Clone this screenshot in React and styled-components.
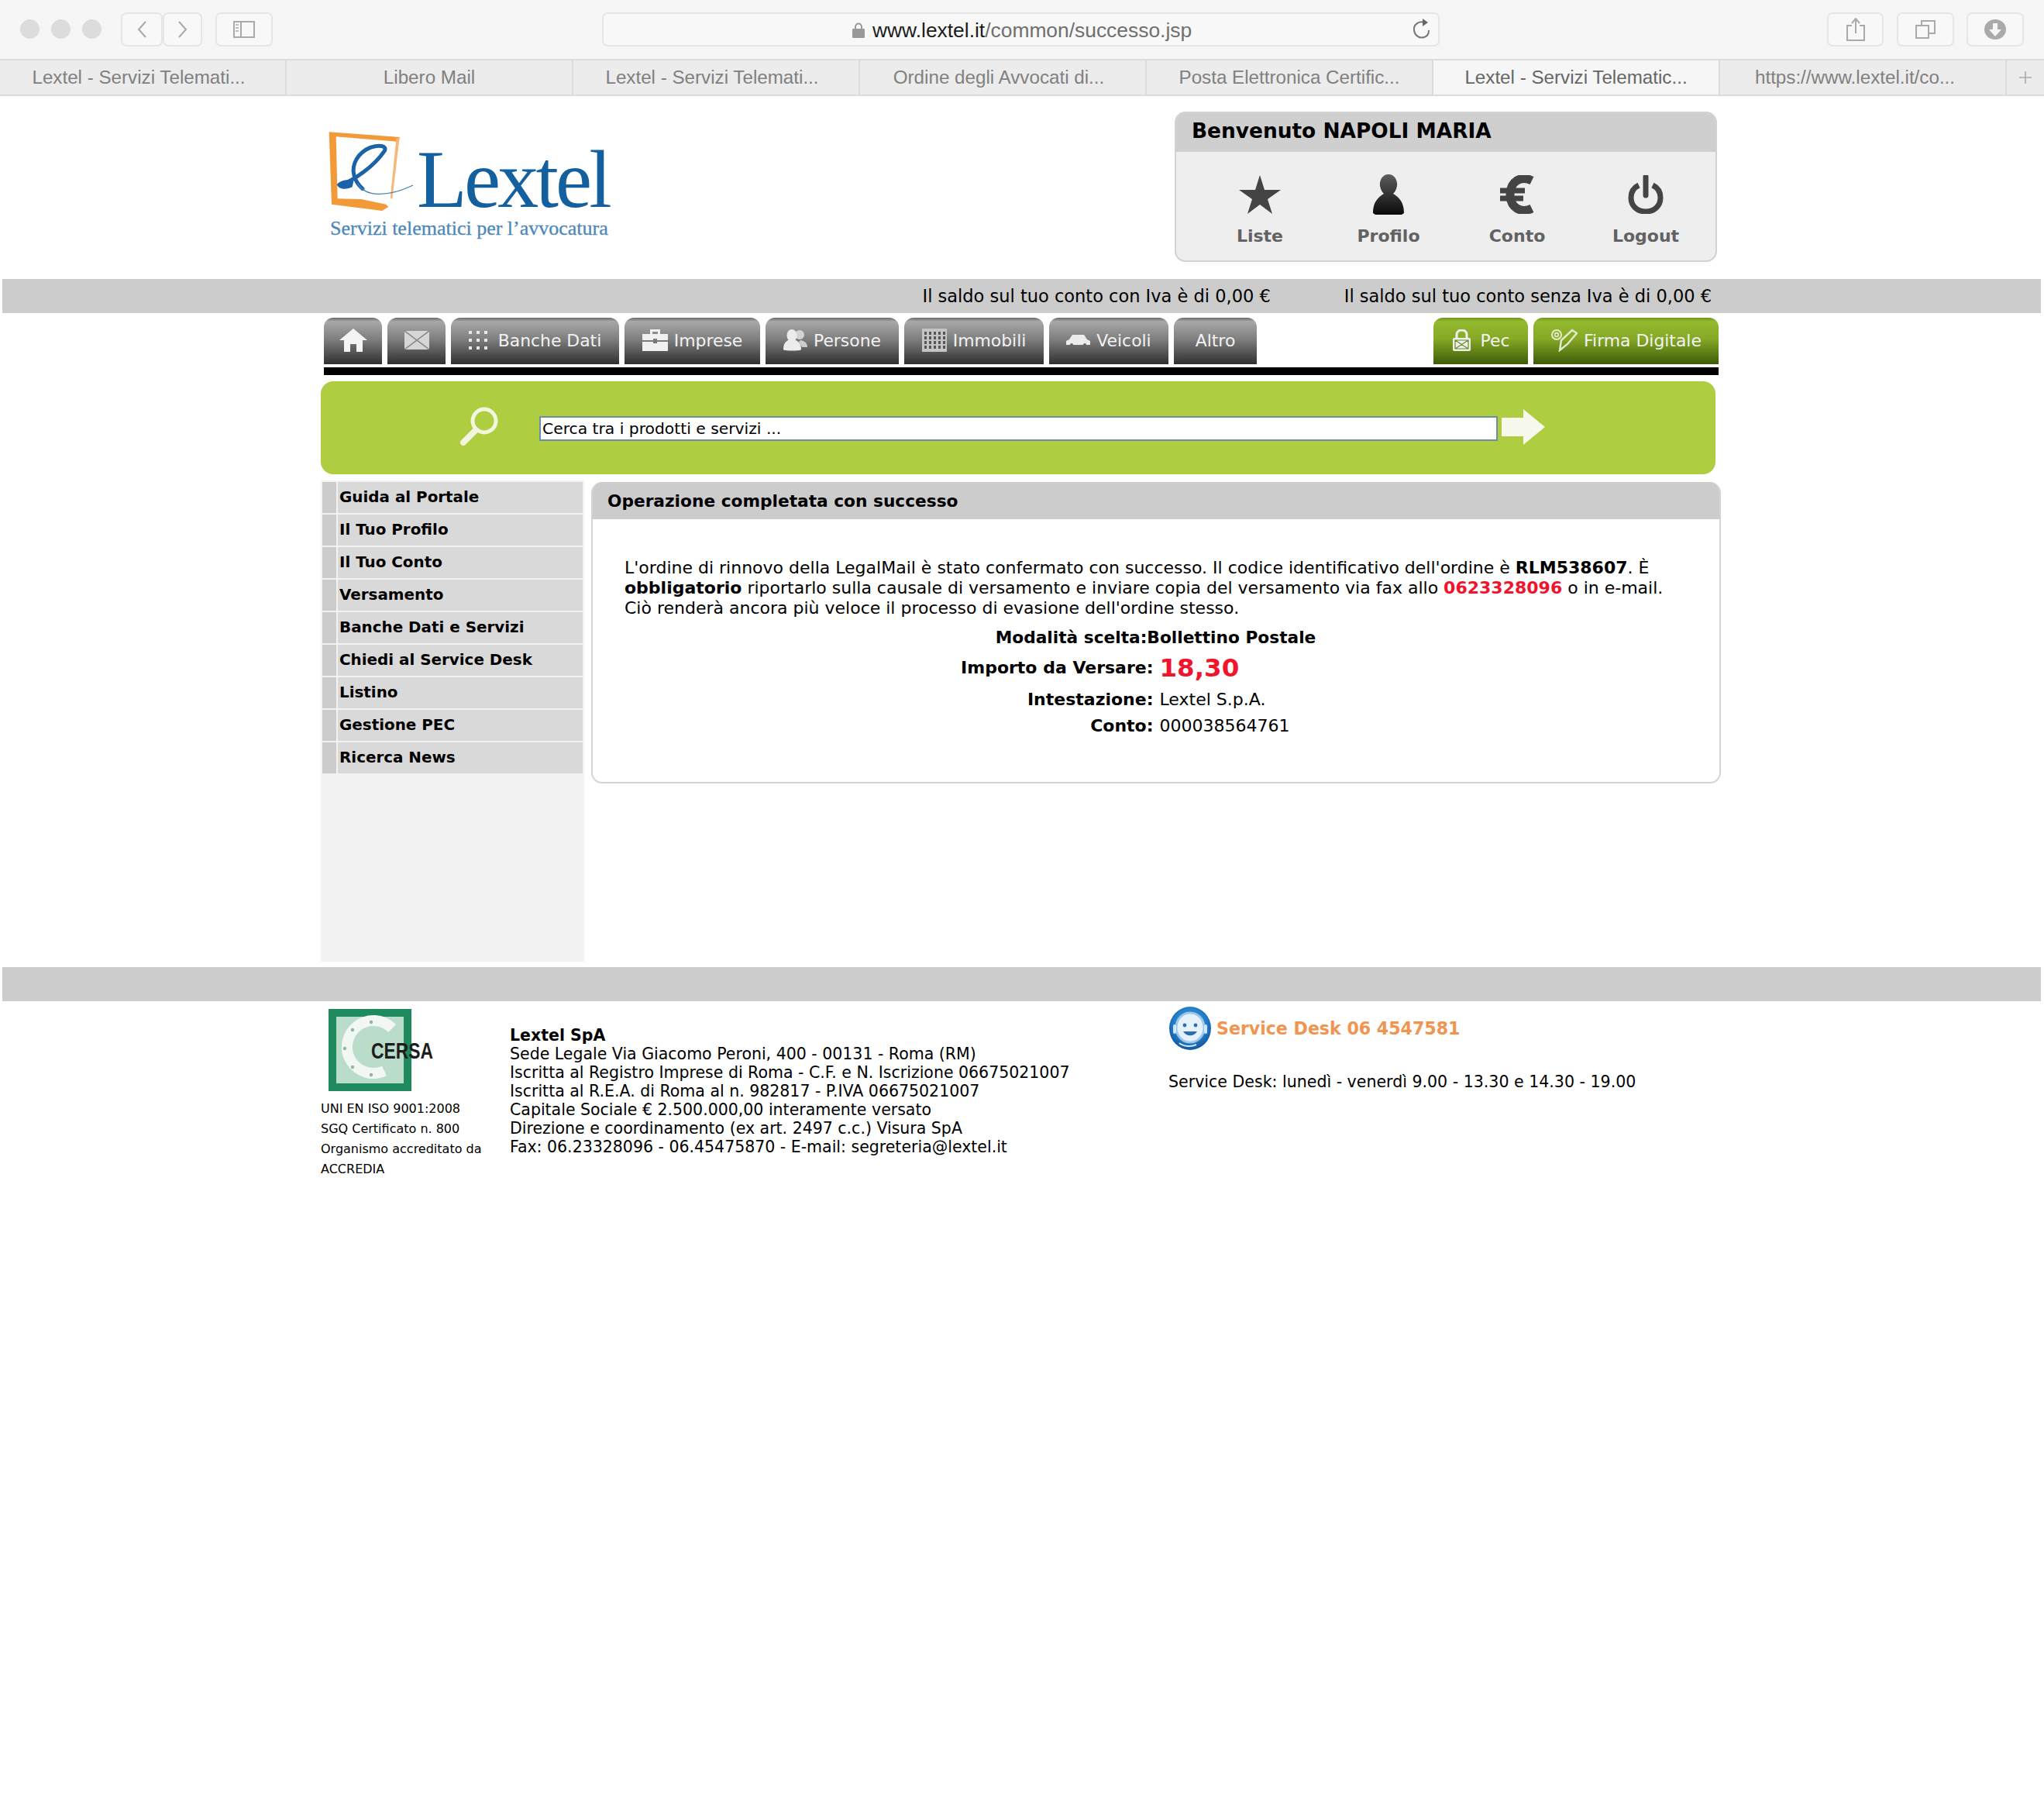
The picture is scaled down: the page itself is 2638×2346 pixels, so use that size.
import styled, { createGlobalStyle } from "styled-components";

const GlobalStyle = createGlobalStyle`
  html, body { margin: 0; padding: 0; background: #fff; }
  body { font-family: "DejaVu Sans", Verdana, sans-serif; color: #000; }
`;

const Page = styled.div`
  width: 2638px;
  min-height: 2346px;
  background: #fff;
`;

/* browser chrome */
const Toolbar = styled.div`
  height: 78px;
  box-sizing: border-box;
  padding-top: 16px;
  background: #f6f6f6;
  border-bottom: 2px solid #dcdcdc;
  display: flex;
  align-items: flex-start;
  font-family: "Liberation Sans", Arial, sans-serif;
`;

const Lights = styled.div`
  display: flex;
  gap: 15px;
  margin: 9px 0 0 26px;
  width: 130px;
`;

const Light = styled.span`
  width: 25px;
  height: 25px;
  border-radius: 50%;
  background: #dcdcdc;
`;

const ChromeButton = styled.div`
  box-sizing: border-box;
  width: ${(p) => p.$w}px;
  height: 44px;
  margin-left: ${(p) => p.$ml || 0}px;
  border: 2px solid #e6e6e6;
  border-radius: 7px;
  background: #f8f8f8;
  display: flex;
  align-items: center;
  justify-content: center;
`;

const UrlBar = styled.div`
  box-sizing: border-box;
  width: 1081px;
  height: 44px;
  margin-left: 425px;
  border: 2px solid #e6e6e6;
  border-radius: 7px;
  background: #f8f8f8;
  display: flex;
  align-items: center;
  position: relative;
  padding: 2px 0 0 321px;
  gap: 10px;
  font-size: 26.4px;
  color: #6f6f6f;
`;

const UrlHost = styled.span`
  color: #1c1c1c;
`;

const Reload = styled.span`
  position: absolute;
  right: 10px;
  top: 5px;
  display: flex;
`;

const TabStrip = styled.div`
  height: 46px;
  box-sizing: border-box;
  display: flex;
  background: #ececec;
  border-bottom: 2px solid #dcdcdc;
  font-family: "Liberation Sans", Arial, sans-serif;
`;

const BrowserTab = styled.div`
  box-sizing: border-box;
  width: 370px;
  border-right: 2px solid #dcdcdc;
  background: ${(p) => (p.$active ? "#f6f6f6" : "#ececec")};
  color: ${(p) => (p.$active ? "#666" : "#808080")};
  font-size: 24.2px;
  padding-right: ${(p) => p.$pr || 0}px;
  display: flex;
  align-items: center;
  justify-content: center;
`;

const NewTab = styled.div`
  flex: 1;
  display: flex;
  align-items: center;
  justify-content: center;
  color: #aaa;
`;

/* page header */
const Wrap = styled.div`
  width: 1810px;
  margin-left: 414px;
`;

const Header = styled.div`
  height: 236px;
  display: flex;
  justify-content: space-between;
  align-items: flex-start;
`;

const Logo = styled.div`
  margin: 44px 0 0 9px;
  display: flex;
  flex-direction: column;
`;

const LogoRow = styled.div`
  display: flex;
  align-items: flex-end;
  height: 106px;
`;

const LogoWord = styled.span`
  font-family: "Liberation Serif", "Times New Roman", serif;
  font-size: 106px;
  line-height: 96px;
  letter-spacing: -3.8px;
  color: #14609f;
  margin: 0 0 -6px -1px;
`;

const LogoTag = styled.span`
  font-family: "Liberation Serif", "Times New Roman", serif;
  font-size: 26px;
  line-height: 30px;
  margin: 6px 0 0 3px;
  color: #4c88b8;
  -webkit-text-stroke: 0.3px #4c88b8;
`;

const UserBox = styled.div`
  box-sizing: border-box;
  width: 700px;
  height: 194px;
  margin: 20px 8px 0 0;
  border: 2px solid #d2d2d2;
  border-radius: 14px;
  background: #eee;
  overflow: hidden;
`;

const UserTitle = styled.div`
  box-sizing: border-box;
  height: 52px;
  margin-top: -2px;
  background: #cfcfcf;
  display: flex;
  align-items: center;
  padding: 0 0 3px 20px;
  font-size: 26.4px;
  font-weight: bold;
  color: #000;
`;

const UserActions = styled.div`
  display: flex;
  padding: 29px 0 0 25px;
`;

const UserAction = styled.div`
  width: 166px;
  display: flex;
  flex-direction: column;
  align-items: center;
  gap: 15px;
  font-size: 22px;
  font-weight: bold;
  color: #626262;
`;

const UserIcon = styled.div`
  height: 52px;
  display: flex;
  align-items: center;
`;

const GreyBand = styled.div`
  height: 44px;
  margin: 0 4px 0 3px;
  background: #ccc;
  display: flex;
  align-items: center;
  justify-content: flex-end;
  padding-right: 425px;
  gap: 95px;
  font-size: 22.5px;
`;

/* nav */
const Nav = styled.div`
  display: flex;
  gap: 7px;
  padding: 6px 6px 0 4px;
  height: 70px;
  box-sizing: border-box;
`;

const NavTab = styled.div`
  box-sizing: border-box;
  width: ${(p) => p.$w}px;
  height: 60px;
  margin-left: ${(p) => (p.$push ? "auto" : "0")};
  border-radius: 12px 12px 0 0;
  background: ${(p) =>
    p.$green
      ? "linear-gradient(#6f9420 0, #94ba2e 8%, #86a926 45%, #3d5c08 100%)"
      : "linear-gradient(#6a6a6a 0, #a8a8a8 8%, #808080 45%, #303030 100%)"};
  display: flex;
  align-items: center;
  justify-content: center;
  gap: ${(p) => p.$gap ?? 8}px;
  padding-bottom: 2px;
  color: #f2f2f2;
  font-size: 21.9px;
`;

const BlackRule = styled.div`
  height: 10px;
  margin-left: 4px;
  background: #000;
  width: 1800px;
`;

const SearchBand = styled.div`
  box-sizing: border-box;
  width: 1800px;
  height: 120px;
  margin-top: 8px;
  border-radius: 16px;
  background: #afcd41;
  display: flex;
  align-items: center;
  padding-left: 180px;
`;

const SearchGlyph = styled.span`
  display: flex;
  margin-bottom: ${(p) => p.$up}px;
`;

const SearchInput = styled.div`
  box-sizing: border-box;
  width: 1237px;
  height: 32px;
  margin: 2px 5px 0 52px;
  border: 2px solid #6c8ea8;
  background: #fff;
  display: flex;
  align-items: center;
  padding: 0 0 1px 2px;
  font-size: 20.3px;
`;

/* body */
const Columns = styled.div`
  display: flex;
  margin-top: 8px;
  align-items: flex-start;
`;

const Sidebar = styled.div`
  box-sizing: border-box;
  width: 340px;
  height: 621px;
  padding: 2px;
  background: #f2f2f2;
  display: flex;
  flex-direction: column;
  gap: 2px;
`;

const SideItem = styled.div`
  height: 40px;
  display: flex;
  background: #d9d9d9;
  font-size: 19.9px;
  font-weight: bold;
  line-height: 40px;
  &::before {
    content: "";
    width: 18px;
    margin-right: 2px;
    background: #ccc;
    border-right: 2px solid #f2f2f2;
  }
`;

const Panel = styled.div`
  box-sizing: border-box;
  width: 1458px;
  height: 389px;
  margin: 2px 0 0 9px;
  border: 2px solid #d4d4d4;
  border-top: 0;
  border-radius: 14px;
  overflow: hidden;
`;

const PanelTitle = styled.div`
  height: 48px;
  margin: 0 -2px;
  background: #ccc;
  display: flex;
  align-items: center;
  padding-left: 21px;
  font-size: 21.7px;
  font-weight: bold;
`;

const PanelBody = styled.div`
  padding: 50px 42px 0 41px;
  font-size: 22px;
`;

const Paragraph = styled.p`
  margin: 0 0 12px;
  line-height: 26px;
`;

const Red = styled.span`
  color: #f0142d;
  font-weight: bold;
`;

const Centered = styled.div`
  text-align: center;
  font-size: 21.7px;
  font-weight: bold;
  line-height: 26px;
`;

const PayGrid = styled.div`
  display: grid;
  grid-template-columns: 1fr 1fr;
  column-gap: 8px;
  align-items: center;
  margin: 2px -4px 0 -2px;
  line-height: 34px;
`;

const PayLabel = styled.span`
  text-align: right;
  font-weight: bold;
`;

const Amount = styled.span`
  color: #f0142d;
  font-size: 32.5px;
  font-weight: bold;
  line-height: 48px;
`;

/* footer */
const FooterBand = styled(GreyBand)`
  margin-top: 7px;
`;

const Footer = styled.div`
  display: flex;
  align-items: flex-start;
`;

const CertCol = styled.div`
  width: 244px;
  padding-top: 10px;
  font-size: 16px;
  line-height: 26px;
`;

const CertLogo = styled.div`
  padding-left: 10px;
  height: 116px;
`;

const Company = styled.div`
  width: 850px;
  padding-top: 32px;
  font-size: 20.5px;
  line-height: 24px;
`;

const CompanyName = styled.div`
  font-weight: bold;
`;

const Service = styled.div`
  padding-top: 6px;
`;

const ServiceHead = styled.div`
  display: flex;
  align-items: center;
  gap: 6px;
  font-size: 22.1px;
  font-weight: bold;
  color: #f0954f;
`;

const ServiceHours = styled.div`
  margin-top: 28px;
  font-size: 20.55px;
`;

const HomeIcon = () => (
  <svg width="36" height="30" viewBox="0 0 36 30">
    <path fill="#f4f4f4" d="M18 0 L36 15 L30 15 L30 30 L22 30 L22 20 L14 20 L14 30 L6 30 L6 15 L0 15 Z" />
  </svg>
);

const MailIcon = () => (
  <svg width="32" height="24" viewBox="0 0 32 24">
    <rect width="32" height="24" fill="#d6d6d6" />
    <path d="M0 0 L32 24 M32 0 L0 24" stroke="#8a8a8a" strokeWidth="1.6" />
  </svg>
);

const DotsIcon = () => (
  <svg width="26" height="24" viewBox="0 0 26 24" fill="#e8e8e8">
    {[0, 10, 20].flatMap((y) =>
      [0, 10, 20].map((x) => <rect key={`${x}-${y}`} x={x} y={y} width="4" height="4" />)
    )}
  </svg>
);

const BriefcaseIcon = () => (
  <svg width="33" height="28" viewBox="0 0 33 28">
    <path fill="#f0f0f0" d="M10 0 H23 V6 H33 V14 H19 V12 H14 V14 H0 V6 H10 Z M13 3 V6 H20 V3 Z" fillRule="evenodd" />
    <path fill="#f0f0f0" d="M0 16 H14 V18 H19 V16 H33 V28 H0 Z" />
  </svg>
);

const PeopleIcon = () => (
  <svg width="31" height="28" viewBox="0 0 31 28" fill="#ececec">
    <circle cx="21" cy="7" r="6" opacity="0.75" />
    <path opacity="0.75" d="M22 14 C28 15 31 18 31 23 H24 L20 16 Z" />
    <ellipse cx="11" cy="8" rx="6.5" ry="8" />
    <path d="M6 14 L16 14 C22 17 23 21 23 26 C23 28 0 28 0 26 C0 21 1 17 6 14 Z" />
  </svg>
);

const BuildingIcon = () => (
  <svg width="32" height="30" viewBox="0 0 32 30">
    <rect width="32" height="30" fill="#c4c4c4" />
    {[4, 10, 16, 22].flatMap((y) =>
      [3, 9, 15, 21, 27].map((x) => <rect key={`${x}-${y}`} x={x} y={y} width="3" height="4" fill="#555" />)
    )}
  </svg>
);

const CarIcon = () => (
  <svg width="31" height="15" viewBox="0 0 31 15" fill="#ececec">
    <path d="M8 0 H23 L27 6 L31 8 V13 H0 V8 L4 6 Z" />
    <circle cx="7" cy="13" r="2" fill="#666" />
    <circle cx="24" cy="13" r="2" fill="#666" />
  </svg>
);

const PecIcon = () => (
  <svg width="25" height="28" viewBox="0 0 25 28">
    <path d="M6 12 V7 C6 -1 19 -1 19 7 V12" fill="none" stroke="#efefef" strokeWidth="3" />
    <rect x="1" y="11" width="23" height="17" rx="2" fill="#efefef" />
    <path d="M4 14 H21 V25 H4 Z M4 14 L21 25 M21 14 L4 25" fill="none" stroke="#6a8c1c" strokeWidth="1.2" />
  </svg>
);

const SignIcon = () => (
  <svg width="35" height="30" viewBox="0 0 35 30" fill="none" stroke="#e4eccb">
    <circle cx="8" cy="8" r="6" strokeWidth="2" />
    <circle cx="8" cy="8" r="2.4" strokeWidth="1.6" />
    <path d="M14 15 L12 28 L22 20 L34 6 L28 2 L14 15 Z" strokeWidth="2.4" />
  </svg>
);

const Magnifier = () => (
  <svg width="50" height="50" viewBox="0 0 50 50" fill="none" stroke="#f2f6df">
    <circle cx="31" cy="18" r="15" strokeWidth="5" />
    <path d="M20 30 L4 46" strokeWidth="8" strokeLinecap="round" />
  </svg>
);

const GoArrow = () => (
  <svg width="56" height="46" viewBox="0 0 56 46">
    <path fill="#f7f9ec" d="M0 11 H28 V0 L56 23 L28 46 V35 H0 Z" />
  </svg>
);

const StarIcon = () => (
  <svg width="54" height="50" viewBox="0 0 54 50">
    <path fill="#444" d="M27 0 L33 19 L54 19 L37 31 L43 50 L27 38 L11 50 L17 31 L0 19 L21 19 Z" />
  </svg>
);

const PersonIcon = () => (
  <svg width="40" height="52" viewBox="0 0 40 52">
    <defs>
      <linearGradient id="personFill" x1="0" y1="0" x2="0" y2="1">
        <stop offset="0" stopColor="#5c5c5c" />
        <stop offset="1" stopColor="#0a0a0a" />
      </linearGradient>
    </defs>
    <path
      fill="url(#personFill)"
      d="M20 0 C28 0 32 8 31 15 C30 20 28 23 26 25 C34 30 40 36 40 50 L37 52 H3 L0 50 C0 36 6 30 14 25 C12 23 10 20 9 15 C8 8 12 0 20 0 Z"
    />
  </svg>
);

const EuroIcon = () => (
  <svg width="44" height="50" viewBox="0 0 44 50" fill="none" stroke="#444">
    <path d="M41 7 C27 0 13 8 13 25 C13 42 27 50 41 43" strokeWidth="11" />
    <path d="M0 20 H32 M0 30 H30" strokeWidth="7" />
  </svg>
);

const PowerIcon = () => (
  <svg width="46" height="50" viewBox="0 0 46 50" fill="none" stroke="#444">
    <path d="M14 13 C6 17 4 23 4 29 C4 40 12 47 23 47 C34 47 42 40 42 29 C42 23 40 17 32 13" strokeWidth="7" />
    <path d="M23 2 V26" strokeWidth="7" strokeLinecap="round" />
  </svg>
);

const LextelMark = () => (
  <svg width="116" height="106" viewBox="70 85 348 318" style={{ flex: "none" }}>
    <path fill="#f29a38" d="M75 92 L348 112 L346 130 L102 110 L108 350 L200 352 L295 372 L305 382 L280 397 L85 372 Z" />
    <path fill="#f5b878" d="M348 112 L335 118 L312 350 L320 350 Z" />
    <path
      fill="none"
      stroke="#1a63a8"
      strokeWidth="15"
      strokeLinecap="round"
      d="M118 298 C170 280 250 225 290 165 C300 145 270 140 235 152 C190 170 160 215 172 260 C178 285 192 300 205 312"
    />
    <path fill="#1a63a8" d="M105 295 C125 275 150 275 170 282 L165 305 C145 315 115 318 105 295 Z" />
    <path fill="none" stroke="#3f83bd" strokeWidth="4" d="M185 290 C215 345 300 345 400 298" />
  </svg>
);

const CersaMark = () => (
  <svg width="150" height="108" viewBox="0 0 150 108">
    <rect x="0" y="0" width="107" height="106" fill="#1f8a5e" />
    <rect x="10" y="10" width="87" height="86" fill="#b9dccb" />
    <path d="M82 25 A34 34 0 1 0 72 80" fill="none" stroke="#f2f7f3" strokeWidth="14" />
    {[90, 135, 180, 225, 270].map((a) => (
      <circle
        key={a}
        cx={55 + 34 * Math.cos((a * Math.PI) / 180)}
        cy={51 + 34 * Math.sin((a * Math.PI) / 180)}
        r="2.2"
        fill="#8cb8a2"
      />
    ))}
    <text x="55" y="64" fontFamily="Liberation Sans, Arial, sans-serif" fontWeight="bold" fontSize="29" textLength="80" lengthAdjust="spacingAndGlyphs" fill="#1d1d1d">CERSA</text>
  </svg>
);

const DeskMark = () => (
  <svg width="56" height="58" viewBox="0 0 56 58">
    <defs>
      <radialGradient id="deskFill" cx="0.5" cy="0.4" r="0.65">
        <stop offset="0.5" stopColor="#2a86cf" />
        <stop offset="1" stopColor="#0d4f96" />
      </radialGradient>
    </defs>
    <ellipse cx="28" cy="29" rx="27" ry="28" fill="url(#deskFill)" />
    <ellipse cx="28" cy="28" rx="18" ry="19" fill="#e6f2fb" stroke="#9cc9ea" strokeWidth="3" />
    <circle cx="21" cy="25" r="2.4" fill="#2a6fae" />
    <circle cx="35" cy="25" r="2.4" fill="#2a6fae" />
    <path d="M19 33 C23 40 33 40 37 33 Z" fill="#2a6fae" />
    <path d="M8 26 V34 M48 26 V34" stroke="#cfe6f7" strokeWidth="4" strokeLinecap="round" />
    <path d="M14 48 C20 53 30 53 36 50" stroke="#cfe6f7" strokeWidth="2" fill="none" />
  </svg>
);

const tabs = [
  { title: "Lextel - Servizi Telemati...", pr: 10 },
  { title: "Libero Mail" },
  { title: "Lextel - Servizi Telemati...", pr: 10 },
  { title: "Ordine degli Avvocati di...", pr: 10 },
  { title: "Posta Elettronica Certific..." },
  { title: "Lextel - Servizi Telematic...", active: true },
  { title: "https://www.lextel.it/co...", pr: 20 },
];

const sideItems = [
  "Guida al Portale",
  "Il Tuo Profilo",
  "Il Tuo Conto",
  "Versamento",
  "Banche Dati e Servizi",
  "Chiedi al Service Desk",
  "Listino",
  "Gestione PEC",
  "Ricerca News",
];

export default function App() {
  return (
    <Page>
      <GlobalStyle />
      <Toolbar>
        <Lights>
          <Light />
          <Light />
          <Light />
        </Lights>
        <ChromeButton $w={54}>
          <svg width="12" height="22" viewBox="0 0 12 22" fill="none" stroke="#a8a8a8" strokeWidth="2">
            <path d="M11 1 L2 11 L11 21" />
          </svg>
        </ChromeButton>
        <ChromeButton $w={51}>
          <svg width="12" height="22" viewBox="0 0 12 22" fill="none" stroke="#a8a8a8" strokeWidth="2">
            <path d="M1 1 L10 11 L1 21" />
          </svg>
        </ChromeButton>
        <ChromeButton $w={74} $ml={17}>
          <svg width="28" height="22" viewBox="0 0 28 22" fill="none" stroke="#aaa" strokeWidth="2">
            <rect x="1" y="1" width="26" height="20" />
            <path d="M10 1 V21" />
            <path d="M3 5 H7 M3 9 H7 M3 13 H7" strokeWidth="1.4" />
          </svg>
        </ChromeButton>
        <UrlBar>
          <svg width="16" height="20" viewBox="0 0 16 20">
            <path d="M4 9 V6 C4 0 12 0 12 6 V9" fill="none" stroke="#999" strokeWidth="2" />
            <rect x="0" y="8" width="16" height="12" rx="1" fill="#999" />
          </svg>
          <span>
            <UrlHost>www.lextel.it</UrlHost>/common/successo.jsp
          </span>
          <Reload>
            <svg width="24" height="28" viewBox="0 0 24 28" fill="none" stroke="#777" strokeWidth="2">
              <path d="M17 6 C8 3 2 10 3 16 C4 23 10 27 16 25 C20 24 22 20 22 16" />
              <path d="M14 1 L21 6 L14 11 Z" fill="#666" stroke="none" />
            </svg>
          </Reload>
        </UrlBar>
        <ChromeButton $w={73} $ml={500}>
          <svg width="24" height="30" viewBox="0 0 24 30" fill="none" stroke="#aaa" strokeWidth="2">
            <path d="M7 10 H1 V29 H23 V10 H17" />
            <path d="M12 20 V2 M7 7 L12 1 L17 7" />
          </svg>
        </ChromeButton>
        <ChromeButton $w={74} $ml={17}>
          <svg width="26" height="24" viewBox="0 0 26 24" fill="none" stroke="#aaa" strokeWidth="2">
            <rect x="1" y="7" width="16" height="16" />
            <path d="M8 7 V1 H25 V17 H17" />
          </svg>
        </ChromeButton>
        <ChromeButton $w={74} $ml={16}>
          <svg width="28" height="26" viewBox="0 0 28 26">
            <ellipse cx="14" cy="13" rx="14" ry="13" fill="#aaa" />
            <path d="M11 5 H17 V13 H22 L14 22 L6 13 H11 Z" fill="#f6f6f6" />
          </svg>
        </ChromeButton>
      </Toolbar>
      <TabStrip>
        {tabs.map((t, i) => (
          <BrowserTab key={i} $active={t.active} $pr={t.pr}>{t.title}</BrowserTab>
        ))}
        <NewTab>
          <svg width="16" height="16" viewBox="0 0 16 16" stroke="#aaa" strokeWidth="1.6">
            <path d="M8 0 V16 M0 8 H16" />
          </svg>
        </NewTab>
      </TabStrip>

      <Wrap>
        <Header>
          <Logo>
            <LogoRow>
              <LextelMark />
              <LogoWord>Lextel</LogoWord>
            </LogoRow>
            <LogoTag>Servizi telematici per l’avvocatura</LogoTag>
          </Logo>
          <UserBox>
            <UserTitle>Benvenuto NAPOLI MARIA</UserTitle>
            <UserActions>
              <UserAction><UserIcon><StarIcon /></UserIcon>Liste</UserAction>
              <UserAction><UserIcon><PersonIcon /></UserIcon>Profilo</UserAction>
              <UserAction><UserIcon><EuroIcon /></UserIcon>Conto</UserAction>
              <UserAction><UserIcon><PowerIcon /></UserIcon>Logout</UserAction>
            </UserActions>
          </UserBox>
        </Header>
      </Wrap>

      <GreyBand>
        <span>Il saldo sul tuo conto con Iva è di 0,00 €</span>
        <span>Il saldo sul tuo conto senza Iva è di 0,00 €</span>
      </GreyBand>

      <Wrap>
        <Nav>
          <NavTab $w={75}><HomeIcon /></NavTab>
          <NavTab $w={75}><MailIcon /></NavTab>
          <NavTab $w={217} $gap={12}><DotsIcon />Banche Dati</NavTab>
          <NavTab $w={175}><BriefcaseIcon />Imprese</NavTab>
          <NavTab $w={172}><PeopleIcon />Persone</NavTab>
          <NavTab $w={180}><BuildingIcon />Immobili</NavTab>
          <NavTab $w={154}><CarIcon />Veicoli</NavTab>
          <NavTab $w={107}>Altro</NavTab>
          <NavTab $w={122} $push $green $gap={12}><PecIcon />Pec</NavTab>
          <NavTab $w={239} $green><SignIcon />Firma Digitale</NavTab>
        </Nav>
        <BlackRule />
        <SearchBand>
          <SearchGlyph $up={4}><Magnifier /></SearchGlyph>
          <SearchInput>Cerca tra i prodotti e servizi ...</SearchInput>
          <SearchGlyph $up={2}><GoArrow /></SearchGlyph>
        </SearchBand>

        <Columns>
          <Sidebar>
            {sideItems.map((s) => (
              <SideItem key={s}>{s}</SideItem>
            ))}
          </Sidebar>
          <Panel>
            <PanelTitle>Operazione completata con successo</PanelTitle>
            <PanelBody>
              <Paragraph>
                L'ordine di rinnovo della LegalMail è stato confermato con successo. Il codice identificativo dell'ordine è <b>RLM538607</b>. È <b>obbligatorio</b> riportarlo sulla causale di versamento e inviare copia del versamento via fax allo <Red>0623328096</Red> o in e-mail. Ciò renderà ancora più veloce il processo di evasione dell'ordine stesso.
              </Paragraph>
              <Centered>Modalità scelta:Bollettino Postale</Centered>
              <PayGrid>
                <PayLabel>Importo da Versare:</PayLabel>
                <Amount>18,30</Amount>
                <PayLabel>Intestazione:</PayLabel>
                <span>Lextel S.p.A.</span>
                <PayLabel>Conto:</PayLabel>
                <span>000038564761</span>
              </PayGrid>
            </PanelBody>
          </Panel>
        </Columns>
      </Wrap>

      <FooterBand />

      <Wrap>
        <Footer>
          <CertCol>
            <CertLogo><CersaMark /></CertLogo>
            UNI EN ISO 9001:2008<br />
            SGQ Certificato n. 800<br />
            Organismo accreditato da<br />
            ACCREDIA
          </CertCol>
          <Company>
            <CompanyName>Lextel SpA</CompanyName>
            Sede Legale Via Giacomo Peroni, 400 - 00131 - Roma (RM)<br />
            Iscritta al Registro Imprese di Roma - C.F. e N. Iscrizione 06675021007<br />
            Iscritta al R.E.A. di Roma al n. 982817 - P.IVA 06675021007<br />
            Capitale Sociale € 2.500.000,00 interamente versato<br />
            Direzione e coordinamento (ex art. 2497 c.c.) Visura SpA<br />
            Fax: 06.23328096 - 06.45475870 - E-mail: segreteria@lextel.it
          </Company>
          <Service>
            <ServiceHead><DeskMark />Service Desk 06 4547581</ServiceHead>
            <ServiceHours>Service Desk: lunedì - venerdì 9.00 - 13.30 e 14.30 - 19.00</ServiceHours>
          </Service>
        </Footer>
      </Wrap>
    </Page>
  );
}
